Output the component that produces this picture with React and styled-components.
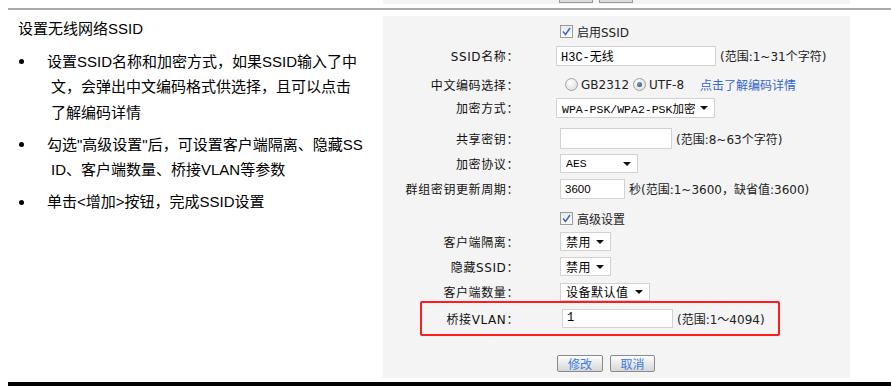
import React from 'react';
import styled, { createGlobalStyle } from 'styled-components';

const GlobalStyle = createGlobalStyle`
  body {
    margin: 0;
    background: #fff;
  }
`;

const Page = styled.div`
  width: 891px;
  height: 386px;
  overflow: hidden;
  padding-left: 8px;
  box-sizing: border-box;
  display: flex;
  flex-direction: column;
`;

// leftover bottom of the previous form, cut off at the top
const TopStrip = styled.div`
  height: 4px;
  display: flex;
  padding-left: 375px;
`;
const StripPanel = styled.div`
  width: 467px;
  background: #f4f4f4;
  display: flex;
  align-items: flex-start;
  gap: 6px;
  padding-left: 176px;
  box-sizing: border-box;
`;
const StripButton = styled.span`
  width: 32px;
  height: 2px;
  border: 1px solid #9a9a9a;
  border-top: none;
  background: #dcdcdc;
`;

const Divider = styled.div`
  margin-top: 4px;
  height: 2px;
  background: #a9a9a9;
`;

const Main = styled.div`
  margin-top: 6px;
  height: 363px;
  display: flex;
`;

const Notes = styled.div`
  width: 375px;
  padding-left: 10px;
  box-sizing: border-box;
  font-family: "Liberation Sans", "Noto Sans CJK SC", sans-serif;
  font-size: 15px;
  color: #000;
`;
const NotesTitle = styled.div`
  margin-top: 3px;
  line-height: 20px;
`;
const List = styled.ul`
  margin: 10px 0 0;
  padding: 0;
  list-style: none;
`;
const Item = styled.li`
  display: flex;
  margin-bottom: 6.5px;
  line-height: 25.5px;
`;
const Dot = styled.span`
  width: 5px;
  height: 5px;
  border-radius: 50%;
  background: #000;
  flex-shrink: 0;
  margin: 10.5px 23px 0 1px;
`;
const Line = styled.span`
  display: block;
  white-space: nowrap;
  padding-left: ${p => (p.cont ? '4px' : '0')};
`;

const Panel = styled.div`
  width: 467px;
  background: #f4f4f4;
  padding-top: 6px;
  box-sizing: border-box;
  font-family: "DejaVu Sans", "Noto Sans CJK SC", sans-serif;
  font-size: 12px;
  color: #222;
`;

const Row = styled.div`
  display: grid;
  grid-template-columns: ${p => (p.highlight ? '97px' : '136px')} auto;
  column-gap: 41px;
  align-items: center;
  min-height: 20px;
  margin-top: ${p => p.top || 0}px;
  ${p =>
    p.highlight &&
    `
    margin-left: 37px;
    width: 360px;
    height: 35px;
    box-sizing: border-box;
    border: 2px solid #ff1c1c;
    border-radius: 2px;
  `}
`;
const Label = styled.span`
  text-align: right;
  white-space: nowrap;
  letter-spacing: 0.6px;
  color: #111;
`;
const Field = styled.div`
  display: flex;
  align-items: center;
  margin-left: ${p => p.shift || 0}px;
  white-space: nowrap;
`;

const TextInput = styled.input`
  width: ${p => p.w}px;
  height: ${p => p.h || 20}px;
  box-sizing: border-box;
  border: 1px solid #d2d2d2;
  background: #fff;
  padding: 0 4px;
  margin: 0;
  font-family: ${p => (p.mono ? '"Liberation Mono", "Noto Sans CJK SC", monospace' : '"Liberation Sans", "Noto Sans CJK SC", sans-serif')};
  font-size: ${p => (p.mono ? '12px' : '11.5px')};
  color: #000;
  outline: none;
`;

const SelectBox = styled.div`
  width: ${p => p.w}px;
  height: ${p => p.h || 19}px;
  box-sizing: border-box;
  border: 1px solid #d2d2d2;
  background: #fff;
  display: flex;
  align-items: center;
  justify-content: space-between;
  padding: 0 6px 0 5px;
  font-family: ${p => (p.mono ? '"Liberation Mono", "Noto Sans CJK SC", monospace' : '"Noto Sans CJK SC", sans-serif')};
  font-size: ${p => (p.mono ? '11.5px' : '12px')};
  letter-spacing: ${p => (p.mono ? '0' : '0.5px')};
  color: #000;
`;
const Caret = styled.span`
  width: 0;
  height: 0;
  border-left: 4px solid transparent;
  border-right: 4px solid transparent;
  border-top: 4px solid #111;
  margin-top: 1px;
`;

const Hint = styled.span`
  margin-left: 4px;
  color: #222;
`;
const Link = styled.span`
  margin-left: 16px;
  color: #3366cc;
  font-family: "Noto Sans CJK SC", sans-serif;
`;

const CheckBox = styled.span`
  width: 13px;
  height: 13px;
  box-sizing: border-box;
  border: 1px solid #9c9c9c;
  background: linear-gradient(#eaeaea, #fdfdfd);
  display: inline-flex;
  align-items: center;
  justify-content: center;
  margin-right: 4px;
`;
const Radio = styled.span`
  width: 13px;
  height: 13px;
  box-sizing: border-box;
  border-radius: 50%;
  border: 1px solid #a3a3a3;
  background: radial-gradient(circle at 40% 35%, #fff, #d8d8d8);
  display: inline-flex;
  align-items: center;
  justify-content: center;
  margin: 0 3px 0 ${p => p.gap || 0}px;
  &::after {
    content: '';
    width: 5px;
    height: 5px;
    border-radius: 50%;
    background: ${p => (p.on ? 'radial-gradient(circle at 40% 35%, #7c9cd0, #2a3f66)' : 'transparent')};
  }
`;

const Buttons = styled.div`
  margin-top: 19px;
  padding-left: 174px;
  display: flex;
  gap: 7px;
`;
const Button = styled.button`
  width: ${p => p.w}px;
  height: 17px;
  padding: 0;
  border: 1px solid #8a8a8a;
  border-radius: 2px;
  background: linear-gradient(#fdfdfd, #d6d6d6);
  color: #3a7be6;
  font-family: "Noto Sans CJK SC", sans-serif;
  font-size: 12px;
  line-height: 15px;
`;

const BottomBar = styled.div`
  margin-top: 4px;
  height: 4px;
  background: #000;
`;

const Check = () => (
  <CheckBox>
    <svg width="9" height="9" viewBox="0 0 9 9">
      <path d="M1 4.5 L3.5 7.5 L8 1" fill="none" stroke="#3d62c4" strokeWidth="1.4" />
    </svg>
  </CheckBox>
);

const notes = [
  ['设置SSID名称和加密方式，如果SSID输入了中', '文，会弹出中文编码格式供选择，且可以点击', '了解编码详情'],
  ['勾选"高级设置"后，可设置客户端隔离、隐藏SS', 'ID、客户端数量、桥接VLAN等参数'],
  ['单击<增加>按钮，完成SSID设置'],
];

const App = () => {
  return (
    <Page>
      <GlobalStyle />
      <TopStrip>
        <StripPanel>
          <StripButton />
          <StripButton />
        </StripPanel>
      </TopStrip>
      <Divider />
      <Main>
        <Notes>
          <NotesTitle>设置无线网络SSID</NotesTitle>
          <List>
            {notes.map((lines, i) => (
              <Item key={i}>
                <Dot />
                <div>
                  {lines.map((l, j) => (
                    <Line key={j} cont={j > 0}>{l}</Line>
                  ))}
                </div>
              </Item>
            ))}
          </List>
        </Notes>

        <Panel>
          <Row>
            <Label />
            <Field><Check />启用SSID</Field>
          </Row>
          <Row top={4}>
            <Label>SSID名称：</Label>
            <Field shift={-4}>
              <TextInput w={160} mono defaultValue="H3C-无线" />
              <Hint>(范围:1~31个字符)</Hint>
            </Field>
          </Row>
          <Row top={9}>
            <Label>中文编码选择：</Label>
            <Field>
              <Radio gap={5} />GB2312
              <Radio gap={4} on />UTF-8
              <Link>点击了解编码详情</Link>
            </Field>
          </Row>
          <Row top={3}>
            <Label>加密方式：</Label>
            <Field shift={-4}>
              <SelectBox w={159} h={20} mono>WPA-PSK/WPA2-PSK加密<Caret /></SelectBox>
            </Field>
          </Row>
          <Row top={10}>
            <Label>共享密钥：</Label>
            <Field>
              <TextInput w={112} h={21} />
              <Hint>(范围:8~63个字符)</Hint>
            </Field>
          </Row>
          <Row top={5}>
            <Label>加密协议：</Label>
            <Field>
              <SelectBox w={78} mono>AES<Caret /></SelectBox>
            </Field>
          </Row>
          <Row top={5}>
            <Label>群组密钥更新周期：</Label>
            <Field>
              <TextInput w={65} defaultValue="3600" />
              <Hint>秒(范围:1~3600，缺省值:3600)</Hint>
            </Field>
          </Row>
          <Row top={10}>
            <Label />
            <Field><Check />高级设置</Field>
          </Row>
          <Row top={3}>
            <Label>客户端隔离：</Label>
            <Field>
              <SelectBox w={51}>禁用<Caret /></SelectBox>
            </Field>
          </Row>
          <Row top={5}>
            <Label>隐藏SSID：</Label>
            <Field>
              <SelectBox w={51}>禁用<Caret /></SelectBox>
            </Field>
          </Row>
          <Row top={5}>
            <Label>客户端数量：</Label>
            <Field>
              <SelectBox w={90} h={18}>设备默认值<Caret /></SelectBox>
            </Field>
          </Row>
          <Row top={-1} highlight>
            <Label>桥接VLAN：</Label>
            <Field shift={2}>
              <TextInput w={111} h={19} mono defaultValue="1" />
              <Hint>(范围:1～4094)</Hint>
            </Field>
          </Row>
          <Buttons>
            <Button w={46}>修改</Button>
            <Button w={45}>取消</Button>
          </Buttons>
        </Panel>
      </Main>
      <BottomBar />
    </Page>
  );
};

export default App;
